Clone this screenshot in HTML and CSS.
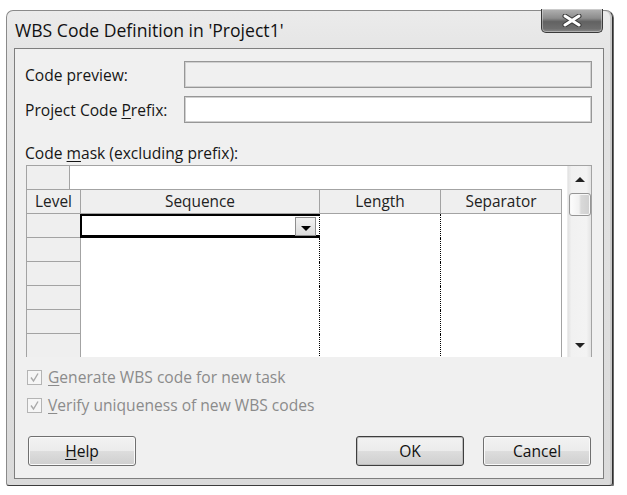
FILE: index.html
```html
<!DOCTYPE html>
<html>
<head>
<meta charset="utf-8">
<title>WBS Code Definition</title>
<link rel="stylesheet" href="styles.css">
</head>
<body>
<div class="window">
  <div class="titlebar">
    <span class="title">WBS Code Definition in 'Project1'</span>
    <div class="close">
      <svg width="20" height="13" viewBox="0 0 20 13">
        <path d="M3 2 L17 11 M17 2 L3 11" stroke="#3a3a3a" stroke-width="5" stroke-linecap="round"/>
        <path d="M3 2 L17 11 M17 2 L3 11" stroke="#ffffff" stroke-width="3" stroke-linecap="round"/>
      </svg>
    </div>
  </div>
  <div class="client">
    <div class="field">
      <span class="label">Code preview:</span>
      <div class="box box-disabled"></div>
    </div>
    <div class="field">
      <span class="label">Project Code <u>P</u>refix:</span>
      <div class="box"></div>
    </div>
    <div class="mask-label">Code <u>m</u>ask (excluding prefix):</div>
    <div class="grid">
      <div class="grid-main">
        <div class="entry-row">
          <div class="corner"></div>
          <div class="entry"></div>
        </div>
        <div class="table">
          <div class="hc">Level</div>
          <div class="hc">Sequence</div>
          <div class="hc">Length</div>
          <div class="hc">Separator</div>
          <div class="pad"></div>

          <div class="rh"></div>
          <div class="seq sel"><div class="drop"><svg width="10" height="5" viewBox="0 0 10 5"><path d="M0 0 H10 L5 5 Z" fill="#000"/></svg></div></div>
          <div class="len"></div>
          <div class="sepc"></div>
          <div class="pad"></div>

          <div class="rh"></div><div class="seq"></div><div class="len"></div><div class="sepc"></div><div class="pad"></div>
          <div class="rh"></div><div class="seq"></div><div class="len"></div><div class="sepc"></div><div class="pad"></div>
          <div class="rh"></div><div class="seq"></div><div class="len"></div><div class="sepc"></div><div class="pad"></div>
          <div class="rh"></div><div class="seq"></div><div class="len"></div><div class="sepc"></div><div class="pad"></div>
          <div class="rh"></div><div class="seq"></div><div class="len"></div><div class="sepc"></div><div class="pad"></div>
        </div>
      </div>
      <div class="scrollbar">
        <div class="sb-btn sb-up"><svg width="10" height="5" viewBox="0 0 10 5"><path d="M0 5 H10 L5 0 Z" fill="#222"/></svg></div>
        <div class="thumb"></div>
        <div class="sb-track"></div>
        <div class="sb-btn sb-down"><svg width="10" height="5" viewBox="0 0 10 5"><path d="M0 0 H10 L5 5 Z" fill="#222"/></svg></div>
      </div>
    </div>
    <div class="check check-first">
      <span class="cb"><svg width="13" height="13" viewBox="0 0 13 13"><path d="M3 6.5 L5.5 10 L10 2.5" fill="none" stroke="#a9a9a9" stroke-width="1.4"/></svg></span>
      <span class="check-text"><u>G</u>enerate WBS code for new task</span>
    </div>
    <div class="check">
      <span class="cb"><svg width="13" height="13" viewBox="0 0 13 13"><path d="M3 6.5 L5.5 10 L10 2.5" fill="none" stroke="#a9a9a9" stroke-width="1.4"/></svg></span>
      <span class="check-text"><u>V</u>erify uniqueness of new WBS codes</span>
    </div>
    <div class="buttons">
      <button class="btn"><u>H</u>elp</button>
      <span class="spacer"></span>
      <button class="btn btn-default">OK</button>
      <button class="btn">Cancel</button>
    </div>
  </div>
</div>
</body>
</html>
```
FILE: styles.css
```css
* { box-sizing: border-box; }

html, body {
  margin: 0;
  padding: 0;
  background: #ffffff;
}

body {
  font-family: "Open Sans", "Noto Sans", sans-serif;
  font-size: 15.6px;
  color: #161616;
}

u {
  text-decoration: underline;
  text-decoration-thickness: 1px;
  text-underline-offset: 2px;
}

/* ---------- window frame ---------- */
.window {
  margin: 10px 0 0 6px;
  width: 607px;
  height: 476px;
  border: 1px solid #8a8a8a;
  border-right-color: #2e2e2e;
  border-bottom-color: #3c3c3c;
  border-radius: 7px 7px 3px 3px;
  background: linear-gradient(to bottom, #ebebeb 0%, #e4e4e4 10%, #dfdfdf 60%, #dadada 100%);
  box-shadow: 1px 1px 0 #6a6a6a, inset -2px 0 0 #c9c9c9;
  padding: 0 8px 6px 7px;
  display: flex;
  flex-direction: column;
}

.titlebar {
  height: 37px;
  display: flex;
  align-items: center;
  flex: none;
}

.title {
  flex: 1;
  padding-left: 1px;
  padding-top: 1px;
  font-size: 17.6px;
  color: #111;
  white-space: nowrap;
}

.close {
  align-self: flex-start;
  margin-top: -2px;
  margin-right: 1px;
  width: 62px;
  height: 24px;
  border: 1px solid #3a3a3a;
  border-top: none;
  border-radius: 0 0 5px 5px;
  background: linear-gradient(to bottom, #b2b2b2 0%, #8c8c8c 40%, #626262 55%, #6e6e6e 85%, #8a8a8a 100%);
  box-shadow: inset 0 0 0 1px rgba(255,255,255,0.35);
  display: flex;
  align-items: center;
  justify-content: center;
}

/* ---------- client area ---------- */
.client {
  flex: 1;
  border: 1px solid #7e7e7e;
  background: #f0f0f0;
  padding: 12px 11px 0 10px;
  display: flex;
  flex-direction: column;
}

.field {
  display: flex;
  align-items: center;
  height: 27px;
  margin-bottom: 8px;
}

.label {
  width: 159px;
  flex: none;
  white-space: nowrap;
}

.box {
  flex: 1;
  height: 27px;
  border: 1px solid #979797;
  box-shadow: inset 0 0 0 1px #d0d0d0;
  background: #ffffff;
}

.box-disabled {
  background: #f0f0f0;
}

.mask-label {
  margin-top: 12px;
  height: 20px;
  line-height: 20px;
  white-space: nowrap;
}

/* ---------- grid ---------- */
.grid {
  margin: 2px 0 0 1px;
  height: 192px;
  border: 1px solid #a3a3a3;
  border-bottom: none;
  background: #ffffff;
  display: flex;
  overflow: hidden;
  flex: none;
}

.grid-main {
  width: 540px;
  flex: none;
  display: flex;
  flex-direction: column;
}

.entry-row {
  height: 23px;
  display: flex;
  flex: none;
}

.corner {
  width: 43px;
  background: #efefef;
  border-right: 1px solid #a3a3a3;
}

.entry {
  flex: 1;
  background: #fff;
}

.table {
  display: grid;
  grid-template-columns: 54px 239px 121px 121px 5px;
  grid-template-rows: 25px repeat(6, 24px);
}

.hc {
  background: #efefef;
  border-top: 1px solid #a3a3a3;
  border-right: 1px solid #a3a3a3;
  border-bottom: 1px solid #a3a3a3;
  display: flex;
  align-items: center;
  justify-content: center;
  color: #222;
  font-size: 15.4px;
  white-space: nowrap;
}

.rh {
  background: #efefef;
  border-right: 1px solid #a3a3a3;
  border-bottom: 1px solid #a3a3a3;
}

.seq,
.len {
  border-right: 1px dotted #000;
  background: #fff;
}

.sepc {
  border-right: 1px solid #a3a3a3;
  background: #fff;
}

.pad {
  background: #fff;
}

.sel {
  border-top: 2px solid #000;
  border-left: 2px solid #000;
  border-bottom: 3px solid #000;
  margin-left: -1px;
  display: flex;
  align-items: center;
  justify-content: flex-end;
  padding-right: 3px;
}

.drop {
  width: 21px;
  height: 19px;
  margin-top: 1px;
  background: linear-gradient(to bottom, #f2f2f2, #dcdcdc);
  border: 1px solid #8e8e8e;
  display: flex;
  align-items: center;
  justify-content: center;
  padding-top: 4px;
}

/* ---------- scrollbar ---------- */
.scrollbar {
  width: 24px;
  flex: none;
  display: flex;
  flex-direction: column;
  align-items: center;
  background: linear-gradient(to right, #e2e2e2 0%, #f1f1f1 15%, #f3f3f3 80%, #e4e4e4 100%);
  border-left: 1px solid #ececec;
}

.sb-btn {
  width: 100%;
  display: flex;
  align-items: center;
  justify-content: center;
}

.sb-up {
  height: 25px;
  padding-top: 2px;
}

.sb-down {
  height: 24px;
}

.thumb {
  width: 22px;
  height: 23px;
  margin-top: 2px;
  border: 1px solid #959595;
  border-radius: 3px;
  background: linear-gradient(to right, #fdfdfd 0%, #f1f1f1 45%, #d9d9d9 55%, #cfcfcf 100%);
  box-shadow: inset 0 0 0 1px #f7f7f7;
}

.sb-track {
  flex: 1;
}

/* ---------- checkboxes ---------- */
.check {
  display: flex;
  align-items: center;
  height: 20px;
  margin-top: 8px;
  margin-left: 2px;
  color: #8b8b8b;
  white-space: nowrap;
}

.check-first {
  margin-top: 10px;
}

.cb {
  width: 15px;
  height: 15px;
  border: 1px solid #b4b4b4;
  background: #f6f6f6;
  margin-right: 6px;
  display: flex;
  align-items: center;
  justify-content: center;
}

/* ---------- buttons ---------- */
.buttons {
  display: flex;
  margin-top: 21px;
  margin-left: 3px;
  margin-right: 1px;
  gap: 19px;
}

.spacer {
  flex: 1;
}

.btn {
  width: 108px;
  height: 30px;
  border: 1px solid #707070;
  border-radius: 3px;
  background: linear-gradient(to bottom, #f2f2f2 0%, #ebebeb 50%, #dddddd 51%, #cfcfcf 100%);
  box-shadow: inset 0 0 0 1px #fafafa;
  font-family: "Open Sans", "Noto Sans", sans-serif;
  font-size: 15.6px;
  color: #111;
  padding: 0;
  display: flex;
  align-items: center;
  justify-content: center;
}

.btn-default {
  border-color: #3e3e3e;
  box-shadow: inset 0 0 0 1px #bdbdbd;
}
```
